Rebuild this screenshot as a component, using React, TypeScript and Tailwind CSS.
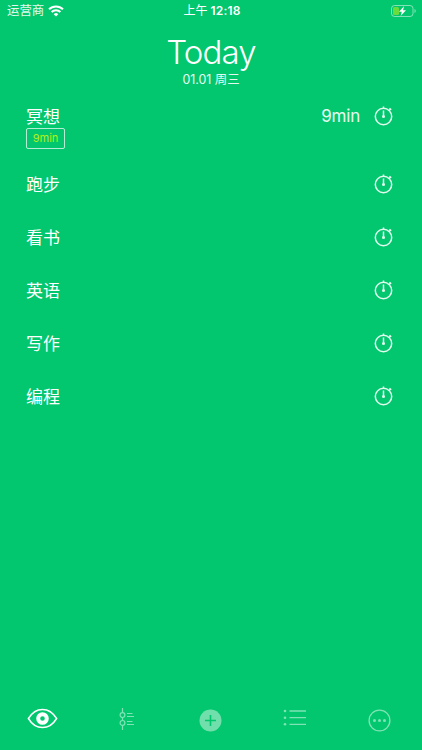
type Habit = {
  name: string;
  minutes?: number;
};

const habits: Habit[] = [
  { name: "冥想", minutes: 9 },
  { name: "跑步" },
  { name: "看书" },
  { name: "英语" },
  { name: "写作" },
  { name: "编程" },
];

function StatusBar() {
  return (
    <div className="grid h-[22px] grid-cols-[1fr_auto_1fr] items-center pl-[7px] pr-[5px] text-[12px] leading-[22px]">
      <div className="flex items-center gap-1">
        <span className="text-[12.4px] text-white/90">运营商</span>
        <svg width="16" height="12" viewBox="0 0 16 12" fill="none" stroke="white" strokeWidth="2">
          <path d="M1 4.3a10 10 0 0 1 14 0" />
          <path d="M3.6 7a6.3 6.3 0 0 1 8.8 0" />
          <path d="M8 11.6 5.7 9.2a3.3 3.3 0 0 1 4.6 0z" fill="white" stroke="none" />
        </svg>
      </div>
      <div className="flex gap-[3px]">
        <span>上午</span>
        <span className="font-semibold tracking-[0.2px]">12:18</span>
      </div>
      <svg className="justify-self-end" width="26" height="12" viewBox="0 0 26 12" fill="none">
        <rect x="0.5" y="0.5" width="21.5" height="11" rx="3" stroke="white" strokeOpacity="0.5" />
        <rect x="2" y="2" width="6" height="8" rx="1.5" fill="#6bdc3c" />
        <path d="M13.2 1 8 6.8h2.8L9.6 11l5.4-5.8h-3z" fill="white" />
        <path d="M23.5 4v4a2.2 2.2 0 0 0 0-4z" fill="white" fillOpacity="0.5" />
      </svg>
    </div>
  );
}

function Stopwatch() {
  return (
    <svg width="20" height="20" viewBox="0 0 20 20" fill="none" stroke="#e3fbef" strokeWidth="1.5">
      <circle cx="9.5" cy="10.5" r="8.2" />
      <path d="M9.5 0.6v2M9.5 4.5v6" />
      <path d="m15.1 4.5 1.5-1.6M15.5 2.3l1.7 1.5" />
      <circle cx="9.5" cy="10.6" r="1.5" fill="#e3fbef" stroke="none" />
    </svg>
  );
}

function HabitRow({ habit }: { habit: Habit }) {
  return (
    <li className={habit.minutes ? "h-[68px]" : "h-[53px]"}>
      <div className="flex h-6 items-center">
        <span className="pt-px text-[17px] leading-6">{habit.name}</span>
        <div className="ml-auto flex items-center gap-[14px]">
          {habit.minutes && (
            <span className="text-[17px] leading-6 tracking-[-0.2px] text-white/90">{habit.minutes}min</span>
          )}
          <Stopwatch />
        </div>
      </div>
      {habit.minutes && (
        <span className="flex h-[21px] w-[39px] items-center justify-center rounded-[2px] border border-white/70 text-[11px] text-[#b5ee1c]">
          {habit.minutes}min
        </span>
      )}
    </li>
  );
}

function TabBar() {
  return (
    <nav className="flex h-[46px] items-start pl-[27px]">
      <svg className="mt-1" width="31" height="21" viewBox="0 0 31 21" fill="none" stroke="white">
        <path d="M1.4 10.5C5 4.5 10 1.4 15.5 1.4S26 4.5 29.6 10.5C26 16.5 21 19.6 15.5 19.6S5 16.5 1.4 10.5z" strokeWidth="1.5" />
        <circle cx="15.5" cy="10.5" r="4.3" strokeWidth="4" />
      </svg>
      <svg className="ml-[61px] mt-1" width="16" height="23" viewBox="0 0 16 23" fill="none" stroke="#7fe3b5" strokeWidth="1.2">
        <path d="M3.5 0v4.7M3.5 9.5v3M3.5 17.3V22" />
        <circle cx="3.5" cy="7.1" r="2.4" />
        <circle cx="3.5" cy="14.9" r="2.4" />
        <path d="M8 5.5h5.5M8 8.5h7M8 13.5h5.5M8 16.5h7" />
      </svg>
      <svg className="ml-16 mt-[5px]" width="23" height="23" viewBox="0 0 23 23" fill="none">
        <circle cx="11.5" cy="11.5" r="11" fill="#70dfab" />
        <path d="M11.5 6v11M6 11.5h11" stroke="#02c76e" strokeWidth="1.6" />
      </svg>
      <svg className="ml-[61px] mt-[5px]" width="24" height="17" viewBox="0 0 24 17" stroke="#7fe3b5" strokeWidth="1.3">
        <path d="M6.5 2H23M6.5 8.7H23M6.5 15.3H23" />
        <g fill="#7fe3b5" stroke="none">
          <circle cx="2" cy="2" r="1.3" />
          <circle cx="2" cy="8.7" r="1.3" />
          <circle cx="2" cy="15.3" r="1.3" />
        </g>
      </svg>
      <svg className="ml-[61px] mt-[5px]" width="23" height="23" viewBox="0 0 23 23" fill="none">
        <circle cx="11.5" cy="11.5" r="10.4" stroke="#7fe3b5" strokeWidth="1.3" />
        <g fill="#7fe3b5">
          <circle cx="6.5" cy="11.5" r="1.5" />
          <circle cx="11.5" cy="11.5" r="1.5" />
          <circle cx="16.5" cy="11.5" r="1.5" />
        </g>
      </svg>
    </nav>
  );
}

export default function App() {
  return (
    <div className="flex h-screen flex-col bg-[#02c76e] font-['Inter','Noto_Sans_CJK_SC',sans-serif] text-white">
      <StatusBar />
      <header className="flex h-[82px] flex-col items-center pt-[10px]">
        <h1 className="text-[33px] font-light leading-10 tracking-[-0.9px]">Today</h1>
        <p className="text-[12.4px] leading-[15px] text-white/90">01.01 周三</p>
      </header>
      <ul className="flex-1 pl-[26px] pr-[28px]">
        {habits.map((habit) => (
          <HabitRow key={habit.name} habit={habit} />
        ))}
      </ul>
      <TabBar />
    </div>
  );
}
